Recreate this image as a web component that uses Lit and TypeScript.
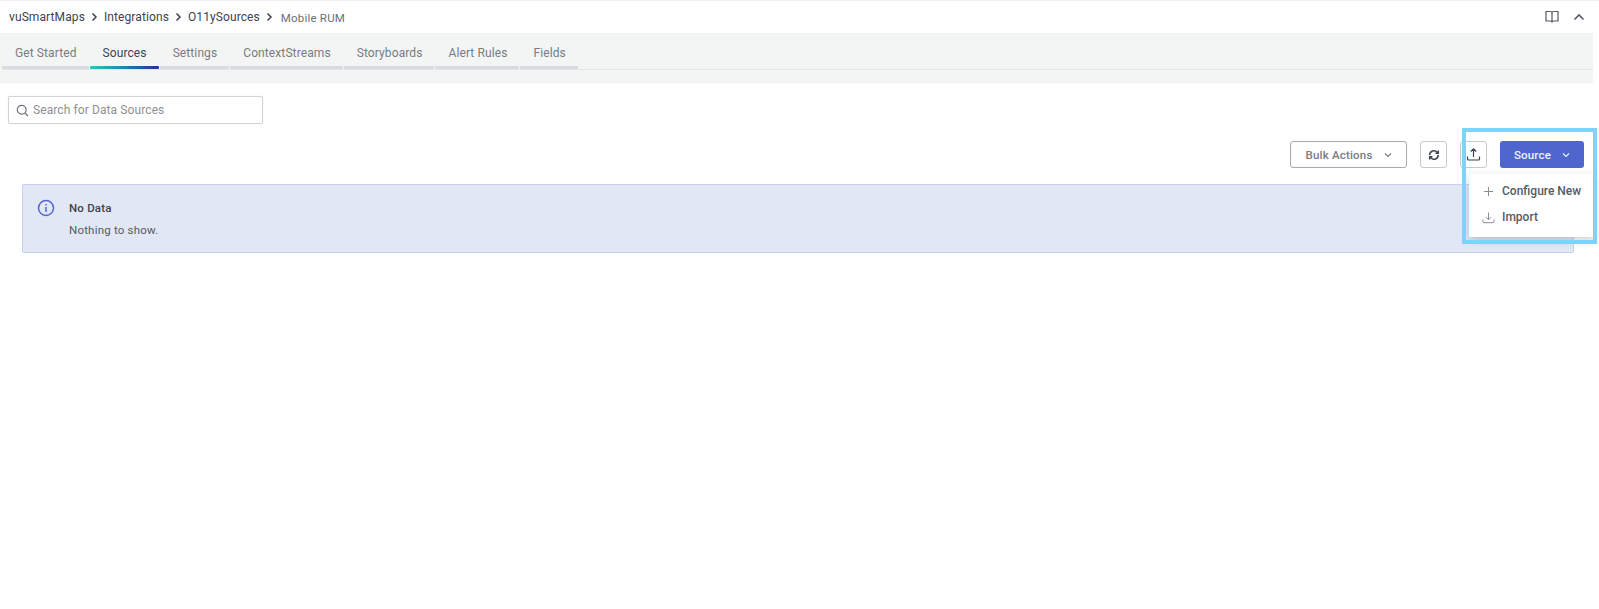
import { LitElement, html, css } from "lit";
import { customElement } from "lit/decorators.js";

const TABS = ["Get Started", "Sources", "Settings", "ContextStreams", "Storyboards", "Alert Rules", "Fields"];

@customElement("app-root")
export class AppRoot extends LitElement {
  static styles = css`
    :host { display: block; position: relative; width: 1599px; height: 609px; background: #fff; overflow: hidden;
      font-family: Roboto, "Noto Sans", sans-serif; color: #454b54; font-size: 12px; letter-spacing: .1px; }
    * { box-sizing: border-box; }
    svg { display: block; flex: none; }
    .top { height: 33px; border-top: 1px solid #f0f0f0; padding: 0 14px 0 9px; display: flex; align-items: center; }
    .crumb { font-size: 12px; color: #3d4350; }
    .sep { margin: 0 6px; color: #3d4350; }
    .last { font-size: 11.5px; color: #6b6f78; margin: 2px 0 0 2px; letter-spacing: .2px; }
    .spacer { flex: 1; }
    .top-icons { display: flex; align-items: center; gap: 14px; }
    .band { height: 50px; width: 1593px; background: #f3f5f5; padding: 0 0 0 2px; }
    .tabs { display: flex; height: 37px; border-bottom: 1px solid #e3e5e6; width: 100%; }
    .tab { height: 36px; padding: 4px 13px 0; display: flex; align-items: center; color: #777c83; font-size: 12px; position: relative; }
    .tab::after { content: ""; position: absolute; left: 0; right: 1px; bottom: 0; height: 3px; background: #d9dbde; border-radius: 1px; }
    .tab.active { color: #3d4350; }
    .tab.active::after { background: linear-gradient(90deg, #2bc9c0, #1d8ea6 45%, #23319a); }
    .search-row { padding: 13px 0 0 8px; }
    .search { width: 255px; height: 28px; border: 1px solid #d2d4d7; border-radius: 2px; display: flex; align-items: center; gap: 4px; padding: 0 7px; color: #8d9196; font-size: 12px; background: #fff; box-shadow: 0 0 1px #d2d4d7; }
    .actions { display: flex; justify-content: flex-end; align-items: center; gap: 13px; padding: 17px 15px 0 0; }
    .btn { height: 27px; border-radius: 3px; background: #fff; display: flex; align-items: center; justify-content: center; font-weight: 500; font-size: 11.5px; letter-spacing: .2px; }
    .bulk { width: 117px; border: 1.5px solid #a9a9a9; color: #777c83; gap: 11px; }
    .square { width: 27px; border: 1px solid #c9c9c9; }
    .source { width: 84px; background: #4f66cf; color: #eef0fb; gap: 11px; }
    .alert { margin: 16px 25px 0 22px; height: 69px; background: #e2e7f5; border: 1px solid #c6d0f0; border-radius: 2px; display: flex; padding: 15px 14px; gap: 14px; }
    .info { margin-top: -1px; }
    .alert-title { font-weight: 500; color: #3d4350; font-size: 11.5px; line-height: 17px; letter-spacing: .2px; }
    .alert-text { color: #555b64; font-size: 11.5px; line-height: 17px; margin-top: 5px; letter-spacing: .2px; }
    .menu { position: absolute; left: 1469px; top: 174px; width: 126px; height: 63px; background: #fff; box-shadow: 0 3px 8px rgba(70,75,90,.28); display: flex; flex-direction: column; justify-content: center; gap: 8px; padding: 0 0 3px 13px; font-size: 12px; color: #555b64; font-weight: 500; letter-spacing: 0; }
    .item { display: flex; align-items: center; gap: 7px; height: 18px; }
    .highlight { position: absolute; left: 1462px; top: 128px; width: 135px; height: 116px; border: 4px solid #7dd3fc; pointer-events: none; }
  `;

  render() {
    return html`
      <div class="top">
        <span class="crumb">vuSmartMaps</span><span class="sep">${this.chev()}</span>
        <span class="crumb">Integrations</span><span class="sep">${this.chev()}</span>
        <span class="crumb">O11ySources</span><span class="sep">${this.chev()}</span>
        <span class="last">Mobile RUM</span>
        <span class="spacer"></span>
        <div class="top-icons">
          <svg width="14" height="14" viewBox="0 0 14 14" fill="none" stroke="#555b64" stroke-width="1.2"><path d="M1 1.500h4.500c.9 0 1.500.6 1.500 1.500v9.500c0-.8-.6-1.500-1.500-1.500H1zM13 1.500H8.500c-.9 0-1.500.6-1.500 1.500v9.500c0-.8.600-1.500 1.500-1.500H13z"/></svg>
          <svg width="12" height="8" viewBox="0 0 12 8" fill="none" stroke="#555b64" stroke-width="1.600"><path d="M1.500 6.500 6 2l4.500 4.500"/></svg>
        </div>
      </div>
      <div class="band">
        <div class="tabs">
          ${TABS.map((t, i) => html`<div class="tab ${i === 1 ? "active" : ""}">${t}</div>`)}
        </div>
      </div>
      <div class="search-row">
        <div class="search">
          <svg width="13" height="13" viewBox="0 0 13 13" fill="none" stroke="#6d7279" stroke-width="1.200"><circle cx="5.700" cy="5.700" r="4.400"/><path d="m9 9 3 3"/></svg>
          <span>Search for Data Sources</span>
        </div>
      </div>
      <div class="actions">
        <div class="btn bulk"><span>Bulk Actions</span>${this.caret("#777c83")}</div>
        <div class="btn square">
          <svg width="12" height="12" viewBox="0 0 14 14" fill="none" stroke="#3d4350" stroke-width="1.800"><path d="M2 7a5 5 0 0 1 8.700-3.300L12 5M12 7a5 5 0 0 1-8.700 3.300L2 9"/><path d="M12 1.800V5H8.800M2 12.200V9h3.200"/></svg>
        </div>
        <div class="btn square">
          <svg width="15" height="15" viewBox="0 0 15 15" fill="none" stroke="#3d4350" stroke-width="1.200"><path d="M7.500 10V2M4.800 4.500l2.700-2.700 2.700 2.700M1.500 9.500v2.500c0 .6.400 1 1 1h10c.6 0 1-.4 1-1V9.500"/></svg>
        </div>
        <div class="btn source"><span>Source</span>${this.caret("#eef0fb")}</div>
      </div>
      <div class="alert">
        <svg class="info" width="18" height="18" viewBox="0 0 18 18" fill="none" stroke="#4f66cf" stroke-width="1.500"><circle cx="9" cy="9" r="7.500"/><path d="M9 8v5M9 5v1.600"/></svg>
        <div>
          <div class="alert-title">No Data</div>
          <div class="alert-text">Nothing to show.</div>
        </div>
      </div>
      <div class="menu">
        <div class="item">
          <svg width="13" height="13" viewBox="0 0 13 13" fill="none" stroke="#8a8e94" stroke-width="1"><path d="M6.500 2v9M2 6.500h9"/></svg>
          <span>Configure New</span>
        </div>
        <div class="item">
          <svg width="13" height="13" viewBox="0 0 13 13" fill="none" stroke="#8a8e94" stroke-width="1"><path d="M6.500 1.500v7M4 6.200l2.500 2.500L9 6.200M1 8.500v2.200c0 .6.400 1 1 1h9c.6 0 1-.4 1-1V8.500"/></svg>
          <span>Import</span>
        </div>
      </div>
      <div class="highlight"></div>
    `;
  }

  chev() {
    return html`<svg width="7" height="10" viewBox="0 0 7 10" fill="none" stroke="#3d4350" stroke-width="1.500"><path d="m1.500 1.500 3.500 3.500-3.500 3.500"/></svg>`;
  }

  caret(c: string) {
    return html`<svg width="8" height="6" viewBox="0 0 8 6" fill="none" stroke="${c}" stroke-width="1.200"><path d="M1 1.500 4 4.500l3-3"/></svg>`;
  }
}
